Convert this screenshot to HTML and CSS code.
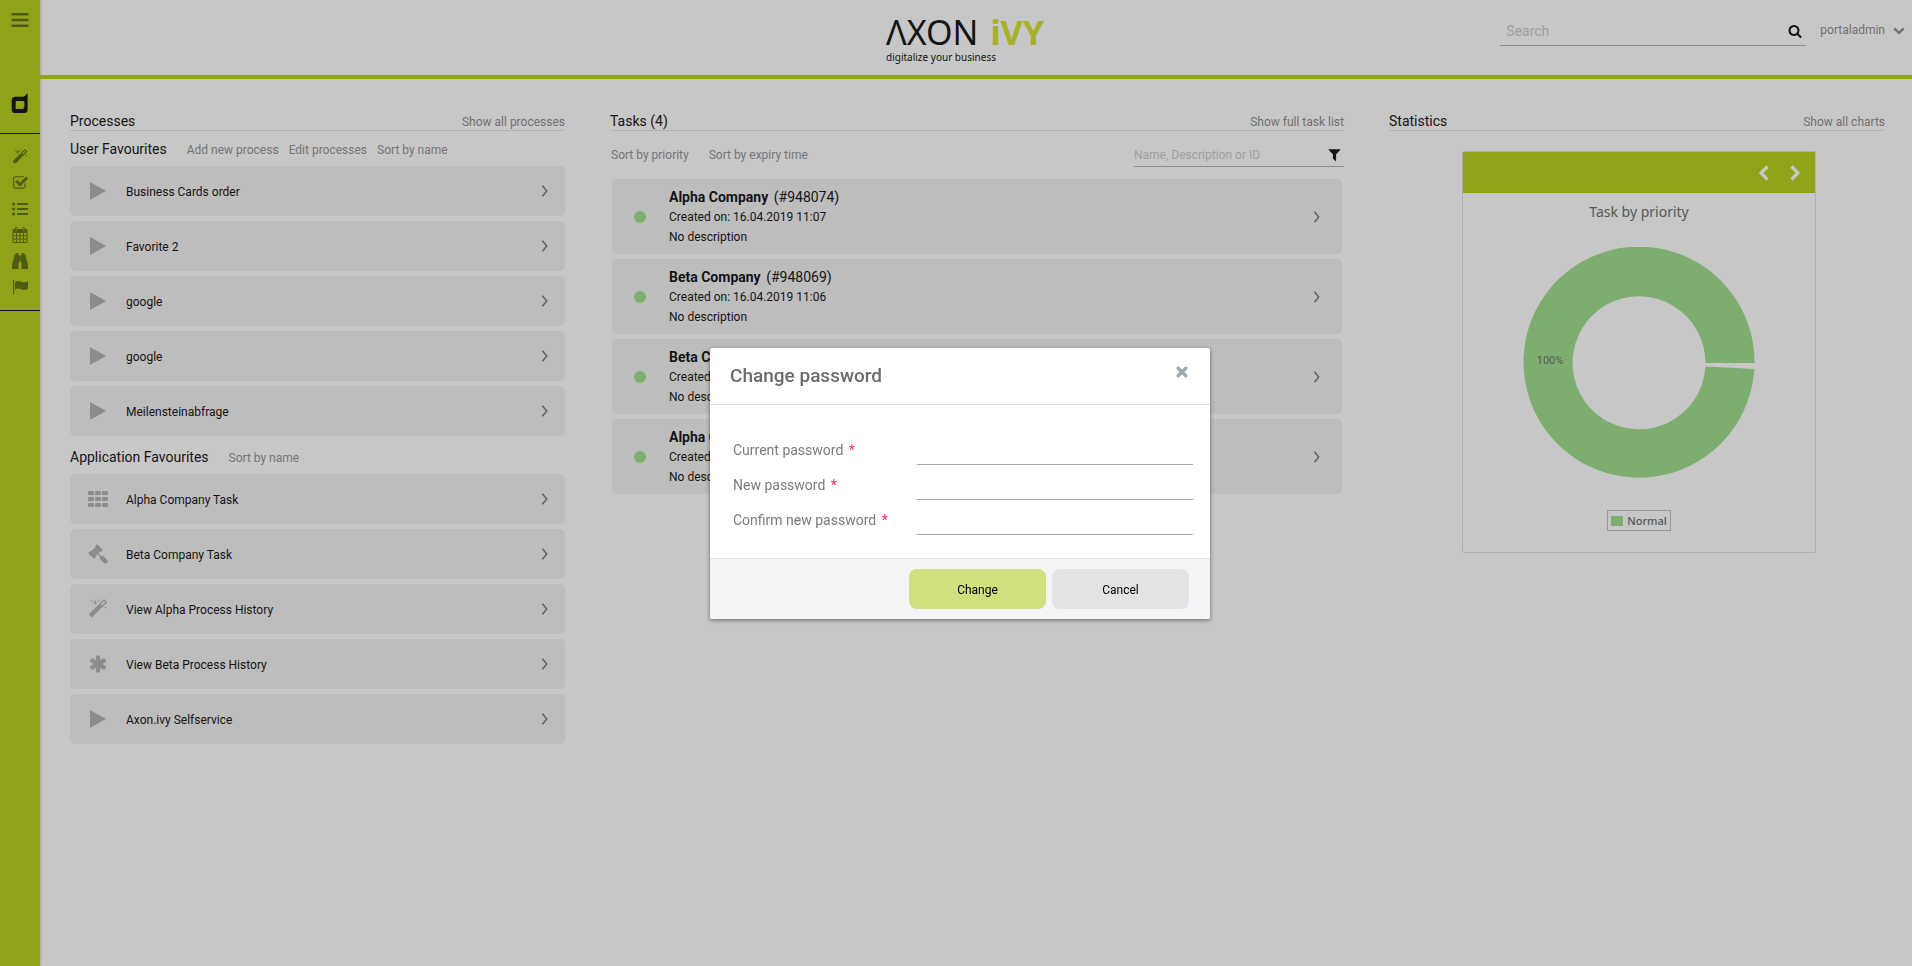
FILE: index.html
```html
<!DOCTYPE html>
<html lang="en">
<head>
<meta charset="utf-8">
<title>Axon.ivy Portal</title>
<link rel="stylesheet" href="styles.css">
</head>
<body>
<svg class="sprite" aria-hidden="true">
  <symbol id="play" viewBox="0 0 20 20"><path d="M2 1L18 10L2 19Z"/></symbol>
  <symbol id="chevron" viewBox="0 0 8 14"><path d="M1 1L6 7L1 13" fill="none" stroke="currentColor" stroke-width="1.8"/></symbol>
  <symbol id="magic" viewBox="0 0 1792 1792"><path d="M1254 581l293-293-107-107-293 293zm447-293q0 27-18 45l-1286 1286q-18 18-45 18t-45-18l-198-198q-18-18-18-45t18-45l1286-1286q18-18 45-18t45 18l198 198q18 18 18 45zm-1351-190l98 30-98 30-30 98-30-98-98-30 98-30 30-98zm350 162l196 60-196 60-60 196-60-196-196-60 196-60 60-196zm930 478l98 30-98 30-30 98-30-98-98-30 98-30 30-98zm-640-640l98 30-98 30-30 98-30-98-98-30 98-30 30-98z"/></symbol>
  <symbol id="th" viewBox="0 0 20 20"><path d="M1 2h4q1 0 1 1v2q0 1-1 1H1q-1 0-1-1V3q0-1 1-1zm7 0h4q1 0 1 1v2q0 1-1 1H8q-1 0-1-1V3q0-1 1-1zm7 0h4q1 0 1 1v2q0 1-1 1h-4q-1 0-1-1V3q0-1 1-1zM1 8h4q1 0 1 1v2q0 1-1 1H1q-1 0-1-1V9q0-1 1-1zm7 0h4q1 0 1 1v2q0 1-1 1H8q-1 0-1-1V9q0-1 1-1zm7 0h4q1 0 1 1v2q0 1-1 1h-4q-1 0-1-1V9q0-1 1-1zM1 14h4q1 0 1 1v2q0 1-1 1H1q-1 0-1-1v-2q0-1 1-1zm7 0h4q1 0 1 1v2q0 1-1 1H8q-1 0-1-1v-2q0-1 1-1zm7 0h4q1 0 1 1v2q0 1-1 1h-4q-1 0-1-1v-2q0-1 1-1z"/></symbol>
  <symbol id="gavel" viewBox="0 0 1792 1792"><path d="M1771 1536q0 53-37 90l-107 108q-39 37-91 37-53 0-90-37l-363-364q-38-36-38-90 0-53 43-96l-256-256-126 126q-14 14-34 14t-34-14q2 2 12.500 12t12.500 13 10 11.500 10 13.500 6 13.500 5.500 16.500 1.500 18q0 38-28 68-3 3-16.500 18t-19 20.500-18.500 16.500-22 15.500-22 9-26 4.500q-40 0-68-28l-408-408q-28-28-28-68 0-13 4.500-26t9-22 15.500-22 16.500-18.500 20.500-19 18-16.500q30-28 68-28 10 0 18 1.500t16.500 5.500 13.500 6 13.500 10 11.500 10 13 12.500 12 12.500q-14-14-14-34t14-34l348-348q14-14 34-14t34 14q-2-2-12.500-12t-12.500-13-10-11.500-10-13.500-6-13.500-5.500-16.500-1.500-18q0-38 28-68 3-3 16.500-18t19-20.500 18.500-16.500 22-15.500 22-9 26-4.500q40 0 68 28l408 408q28 28 28 68 0 13-4.500 26t-9 22-15.500 22-16.500 18.500-20.500 19-18 16.500q-30 28-68 28-10 0-18-1.500t-16.500-5.500-13.500-6-13.500-10-11.500-10-13-12.500-12-12.500q14 14 14 34t-14 34l-126 126 256 256q43-43 96-43 52 0 91 37l363 363q37 39 37 91z"/></symbol>
  <symbol id="asterisk" viewBox="0 0 1792 1792"><path d="M1546 1050q46 26 59.5 77.5t-12.5 97.5l-64 110q-26 46-77.5 59.5t-97.500-12.500l-266-153v307q0 52-38 90t-90 38h-128q-52 0-90-38t-38-90v-307l-266 153q-46 26-97.500 12.500t-77.500-59.500l-64-110q-26-46-12.500-97.500t59.500-77.500l266-154-266-154q-46-26-59.500-77.500t12.500-97.500l64-110q26-46 77.500-59.500t97.500 12.500l266 153v-307q0-52 38-90t90-38h128q52 0 90 38t38 90v307l266-153q46-26 97.500-12.500t77.500 59.500l64 110q26 46 12.500 97.500t-59.500 77.500l-266 154z"/></symbol>
  <symbol id="search" viewBox="0 0 1792 1792"><path d="M1216 832q0-185-131.5-316.5t-316.5-131.5-316.5 131.500-131.500 316.500 131.500 316.500 316.500 131.500 316.500-131.500 131.500-316.500zm512 832q0 52-38 90t-90 38q-54 0-90-38l-343-342q-179 124-399 124-143 0-273.500-55.500t-225-150-150-225-55.500-273.500 55.500-273.500 150-225 225-150 273.500-55.500 273.500 55.500 225 150 150 225 55.500 273.500q0 220-124 399l343 343q37 37 37 90z"/></symbol>
  <symbol id="filter" viewBox="0 0 1792 1792"><path d="M1595 295q17 41-14 70l-493 493v742q0 42-39 59-13 5-25 5-27 0-45-19l-256-256q-19-19-19-45v-486l-493-493q-31-29-14-70 17-39 59-39h1280q42 0 59 39z"/></symbol>
  <symbol id="down" viewBox="0 0 1792 1792"><path d="M1683 808l-742 741q-19 19-45 19t-45-19l-742-741q-19-19-19-45.500t19-45.500l166-165q19-19 45-19t45 19l531 531 531-531q19-19 45-19t45 19l166 165q19 19 19 45.500t-19 45.500z"/></symbol>
  <symbol id="check" viewBox="0 0 1792 1792"><path d="M1472 930v318q0 119-84.5 203.500t-203.500 84.500h-832q-119 0-203.500-84.500t-84.500-203.500v-832q0-119 84.500-203.500t203.500-84.500h832q63 0 117 25 15 7 18 23 3 17-9 29l-49 49q-10 10-23 10-3 0-9-2-23-6-45-6h-832q-66 0-113 47t-47 113v832q0 66 47 113t113 47h832q66 0 113-47t47-113v-254q0-13 9-22l64-64q10-10 23-10 6 0 12 3 20 8 20 29zm231-489l-814 814q-24 24-57 24t-57-24l-430-430q-24-24-24-57t24-57l110-110q24-24 57-24t57 24l263 263 647-647q24-24 57-24t57 24l110 110q24 24 24 57t-24 57z"/></symbol>
</svg>

<div class="app">
  <nav class="sidebar" aria-label="Main menu">
    <button class="side-button menu" aria-label="Toggle menu"><svg width="18" height="16" viewBox="0 0 18 16"><path d="M.5 1h17v2.600H.500zM.500 6.700h17v2.600H.500zM.500 12.400h17V15H.500z"/></svg></button>
    <a class="side-logo" href="#" aria-label="Dashboard"><svg width="18" height="20" viewBox="0 0 18 20"><path fill-rule="evenodd" d="M16.600 0V16.500Q16.600 20 13 20H4.300Q.700 20 .700 16.400V7.500Q.700 3.700 4.500 3.700H12Q14.500 3.200 16.600 0ZM4.700 7.900V15.900H12.600V14.700L13.400 14V8.800L12.600 7.900Z"/></svg></a>
    <div class="side-list">
      <a href="#" aria-label="Processes"><svg width="16" height="16"><use href="#magic"/></svg></a>
      <a href="#" aria-label="Tasks"><svg width="17" height="16"><use href="#check"/></svg></a>
      <a href="#" aria-label="Cases"><svg width="16" height="16" viewBox="0 0 16 16"><circle cx="1.600" cy="3" r="1.600"/><circle cx="1.600" cy="8" r="1.600"/><circle cx="1.600" cy="13" r="1.600"/><path d="M5 2h11v2H5zM5 7h11v2H5zM5 12h11v2H5z"/></svg></a>
      <a href="#" aria-label="Calendar"><svg width="16" height="16" viewBox="0 0 16 16"><path fill-rule="evenodd" d="M1.500 2H3V1Q3 0 4.200 0T5.400 1V2H10.600V1Q10.600 0 11.800 0T13 1V2H14.500Q15.500 2 15.500 3V15Q15.500 16 14.500 16H1.500Q.500 16 .500 15V3Q.500 2 1.500 2ZM1.500 6V8.300H4V6ZM5 6V8.300H7.500V6ZM8.500 6V8.300H11V6ZM12 6V8.300H14.500V6ZM1.500 9.200V11.600H4V9.200ZM5 9.200V11.600H7.500V9.200ZM8.500 9.200V11.600H11V9.200ZM12 9.200V11.600H14.500V9.200ZM1.500 12.600V15H4V12.600ZM5 12.600V15H7.500V12.600ZM8.500 12.600V15H11V12.600ZM12 12.600V15H14.500V12.600ZM3.900 1V4H4.600V1ZM11.500 1V4H12.200V1Z"/></svg></a>
      <a href="#" aria-label="Search"><svg width="16" height="16" viewBox="0 0 16 16"><path d="M3.500 0H6.500V2H7.300V10H6.500V16H0V12L2.300 3.500V2H3.500ZM12.500 0H9.500V2H8.700V10H9.500V16H16V12L13.700 3.500V2H12.500ZM7 3H9V8H7Z"/></svg></a>
      <a href="#" aria-label="Flags"><svg width="16" height="16" viewBox="0 0 16 16"><path d="M.5 1.500A1.200 1.200 0 0 1 2.600 2.500L2.100 3V15H1V3ZM3 3.500Q6 1.200 9 2.700T16 2V9.700Q12.500 12 9 10.300T3 11Z"/></svg></a>
    </div>
  </nav>

  <div class="main">
    <header class="topbar">
      <div class="brand">
        <div class="brand-name"><span>ΛXON</span><b>iVY</b></div>
        <div class="brand-tag">digitalize your business</div>
      </div>
      <div class="top-tools">
        <div class="search-box">
          <input type="text" placeholder="Search" aria-label="Search">
          <button aria-label="Run search"><svg width="14" height="14"><use href="#search"/></svg></button>
        </div>
        <button class="user">portaladmin <svg width="12" height="12"><use href="#down"/></svg></button>
      </div>
    </header>

    <main class="columns">
      <section class="processes">
        <div class="col-head"><h2>Processes</h2><a href="#">Show all processes</a></div>
        <div class="sub-head"><h3>User Favourites</h3><a href="#">Add new process</a><a href="#">Edit processes</a><a href="#">Sort by name</a></div>
        <div class="cards">
          <a class="card" href="#"><svg class="icon"><use href="#play"/></svg><span>Business Cards order</span><svg class="go"><use href="#chevron"/></svg></a>
          <a class="card" href="#"><svg class="icon"><use href="#play"/></svg><span>Favorite 2</span><svg class="go"><use href="#chevron"/></svg></a>
          <a class="card" href="#"><svg class="icon"><use href="#play"/></svg><span>google</span><svg class="go"><use href="#chevron"/></svg></a>
          <a class="card" href="#"><svg class="icon"><use href="#play"/></svg><span>google</span><svg class="go"><use href="#chevron"/></svg></a>
          <a class="card" href="#"><svg class="icon"><use href="#play"/></svg><span>Meilensteinabfrage</span><svg class="go"><use href="#chevron"/></svg></a>
        </div>
        <div class="sub-head second"><h3>Application Favourites</h3><a href="#">Sort by name</a></div>
        <div class="cards">
          <a class="card" href="#"><svg class="icon"><use href="#th"/></svg><span>Alpha Company Task</span><svg class="go"><use href="#chevron"/></svg></a>
          <a class="card" href="#"><svg class="icon"><use href="#gavel"/></svg><span>Beta Company Task</span><svg class="go"><use href="#chevron"/></svg></a>
          <a class="card" href="#"><svg class="icon"><use href="#magic"/></svg><span>View Alpha Process History</span><svg class="go"><use href="#chevron"/></svg></a>
          <a class="card" href="#"><svg class="icon"><use href="#asterisk"/></svg><span>View Beta Process History</span><svg class="go"><use href="#chevron"/></svg></a>
          <a class="card" href="#"><svg class="icon"><use href="#play"/></svg><span>Axon.ivy Selfservice</span><svg class="go"><use href="#chevron"/></svg></a>
        </div>
      </section>

      <section class="tasks">
        <div class="col-head"><h2>Tasks (4)</h2><a href="#">Show full task list</a></div>
        <div class="task-tools">
          <a href="#">Sort by priority</a><a href="#">Sort by expiry time</a>
          <div class="filter-box">
            <input type="text" placeholder="Name, Description or ID" aria-label="Filter tasks">
            <button aria-label="Filter"><svg width="15" height="15"><use href="#filter"/></svg></button>
          </div>
        </div>
        <div class="cards task-cards">
          <a class="task" href="#"><i class="dot"></i><div class="task-text"><h4><b>Alpha Company</b> (#948074)</h4><p>Created on: 16.04.2019 11:07</p><p>No description</p></div><svg class="go"><use href="#chevron"/></svg></a>
          <a class="task" href="#"><i class="dot"></i><div class="task-text"><h4><b>Beta Company</b> (#948069)</h4><p>Created on: 16.04.2019 11:06</p><p>No description</p></div><svg class="go"><use href="#chevron"/></svg></a>
          <a class="task" href="#"><i class="dot"></i><div class="task-text"><h4><b>Beta Company</b></h4><p>Created on:</p><p>No description</p></div><svg class="go"><use href="#chevron"/></svg></a>
          <a class="task" href="#"><i class="dot"></i><div class="task-text"><h4><b>Alpha Company</b></h4><p>Created on:</p><p>No description</p></div><svg class="go"><use href="#chevron"/></svg></a>
        </div>
      </section>

      <section class="stats">
        <div class="col-head"><h2>Statistics</h2><a href="#">Show all charts</a></div>
        <div class="chart-area">
          <div class="chart-card">
            <div class="chart-bar">
              <button aria-label="Previous chart"><svg width="12" height="18" viewBox="0 0 12 18"><path d="M9.500 2.500L3 9L9.500 15.500" fill="none" stroke="currentColor" stroke-width="3.200"/></svg></button>
              <button aria-label="Next chart"><svg width="12" height="18" viewBox="0 0 12 18"><path d="M2.500 2.500L9 9L2.500 15.500" fill="none" stroke="currentColor" stroke-width="3.200"/></svg></button>
            </div>
            <div class="chart-title">Task by priority</div>
            <svg class="donut" width="232" height="232" viewBox="-116 -116 232 232" role="img" aria-label="Normal 100%">
              <path d="M115.500 0A115.500 115.500 0 1 0 115.300 6L66.400 3.500A66.500 66.500 0 1 1 66.500 0Z"/>
              <text x="-89" y="1" text-anchor="middle">100%</text>
            </svg>
            <div class="legend"><i></i>Normal</div>
          </div>
        </div>
      </section>
    </main>
  </div>
</div>

<div class="overlay">
  <form class="dialog" role="dialog" aria-labelledby="dialog-title">
    <div class="dialog-head">
      <h1 id="dialog-title">Change password</h1>
      <button type="button" class="close" aria-label="Close"><svg width="12" height="12" viewBox="0 0 12 12"><path d="M2.200 2.200L9.800 9.800M9.800 2.200L2.200 9.800" fill="none" stroke="currentColor" stroke-width="3.400" stroke-linecap="round"/></svg></button>
    </div>
    <div class="dialog-body">
      <label for="current">Current password <em>*</em></label><input id="current" type="password">
      <label for="new">New password <em>*</em></label><input id="new" type="password">
      <label for="confirm">Confirm new password <em>*</em></label><input id="confirm" type="password">
    </div>
    <div class="dialog-foot">
      <button type="button" class="primary">Change</button>
      <button type="button">Cancel</button>
    </div>
  </form>
</div>
</body>
</html>
```

FILE: styles.css
```css
* { box-sizing: border-box; }
body {
  margin: 0;
  background: #c7c7c7;
  color: #141414;
  font: 12px/16px Roboto, "Liberation Sans", sans-serif;
}
h1, h2, h3, h4, p { margin: 0; font-weight: 400; }
a { color: inherit; text-decoration: none; }
button { border: 0; padding: 0; background: none; color: inherit; font: inherit; }
input { border: 0; padding: 0; background: none; font: inherit; outline: none; min-width: 0; }
input::placeholder { color: #a0a0a0; opacity: 1; }
svg { display: block; fill: currentColor; flex: none; }
.sprite { position: absolute; width: 0; height: 0; }

.app { display: flex; min-height: 100vh; }
.sidebar {
  width: 40px;
  flex: none;
  background: #8fa218;
  color: #4f5d13;
  box-shadow: 1px 0 2px #a8a8ac;
}
.side-button { display: flex; justify-content: center; width: 100%; padding-top: 12px; }
.side-logo { display: flex; justify-content: center; margin-top: 65px; color: #141414; }
.side-list {
  display: flex;
  flex-direction: column;
  margin-top: 20px;
  padding: 10px 0;
  border: solid #141414;
  border-width: 1px 0;
}
.side-list a { display: flex; align-items: center; justify-content: center; height: 26px; }

.main { flex: 1; min-width: 0; }
.topbar {
  display: grid;
  grid-template-columns: 1fr auto 1fr;
  height: 79px;
  border-bottom: 4px solid #8fa218;
}
.brand { grid-column: 2; padding-top: 16px; margin-right: 22px; }
.brand-name { display: flex; gap: 12px; font: 34px/32px "Noto Sans", sans-serif; }
.brand-name b { color: #a5b228; }
.brand-tag { font: 10px/12px "Noto Sans", sans-serif; margin-top: 3px; }
.top-tools { display: flex; justify-content: flex-end; align-items: flex-start; gap: 14px; padding-right: 7px; }
.search-box {
  display: flex;
  align-items: center;
  width: 306px;
  height: 46px;
  padding: 16px 4px 0 6px;
  border-bottom: 1px solid #8e8e8e;
}
.search-box input { flex: 1; font-size: 14px; }
.user { display: flex; align-items: center; gap: 8px; padding-top: 22px; color: #707070; }

.columns {
  display: grid;
  grid-template-columns: 495fr 45fr 734fr 45fr 496fr;
  padding: 32px 27px 0 30px;
}
.processes { grid-column: 1; }
.tasks { grid-column: 3; }
.stats { grid-column: 5; }
.col-head {
  display: flex;
  justify-content: space-between;
  align-items: baseline;
  height: 20px;
  border-bottom: 1px solid #b3b3b3;
  color: #707070;
}
h2, h3 { font-size: 14px; line-height: 20px; color: #141414; }
.sub-head { display: flex; align-items: baseline; gap: 10px; padding: 8px 0 7px; color: #747474; }
.sub-head h3 { margin-right: 10px; }
.second { padding-top: 11px; }
.cards { display: flex; flex-direction: column; gap: 5px; }
.card {
  display: flex;
  align-items: center;
  gap: 18px;
  height: 50px;
  padding: 0 16px 0 18px;
  border-radius: 5px;
  background: #bdbdbd;
}
.card span { flex: 1; padding-top: 2px; }
.icon { width: 20px; height: 20px; color: #8c8c8c; }
.go { width: 8px; height: 12px; color: #636363; }

.task-tools { display: flex; align-items: center; gap: 20px; height: 36px; padding: 12px 0 0 1px; color: #747474; }
.filter-box {
  display: flex;
  align-items: center;
  width: 210px;
  height: 24px;
  margin-left: auto;
  border-bottom: 1px solid #8e8e8e;
  padding-right: 2px;
  color: #141414;
}
.filter-box input { flex: 1; }
.task-cards { padding: 12px 2px 0; }
.task {
  display: flex;
  align-items: center;
  height: 75px;
  padding: 0 21px 0 22px;
  border-radius: 5px;
  background: #bdbdbd;
}
.dot { width: 12px; height: 12px; border-radius: 50%; background: #7ead70; }
.task-text { flex: 1; margin-left: 23px; }
.task h4 { font-size: 14px; line-height: 20px; }
.task b { margin-right: 2px; }
.task p { line-height: 20px; }

.chart-area { padding: 20px 0 0 4px; }
.chart-card {
  display: flex;
  flex-direction: column;
  align-items: center;
  width: 354px;
  margin: 0 auto;
  padding-bottom: 21px;
  border: 1px solid #b0b0b0;
  border-radius: 2px;
  color: #575757;
}
.chart-bar {
  display: flex;
  justify-content: flex-end;
  align-items: center;
  gap: 19px;
  align-self: stretch;
  height: 41px;
  padding-right: 14px;
  background: #8fa218;
  color: #c7c7c7;
}
.chart-title { font: 14px/18px "Noto Sans", sans-serif; margin-top: 10px; }
.donut { margin-top: 26px; color: #7ead70; }
.donut text { fill: #575757; font-size: 11px; }
.legend {
  display: flex;
  align-items: center;
  gap: 4px;
  margin-top: 31px;
  padding: 0 3px;
  border: 1px solid #999;
  font: 500 11px/19px "Noto Sans", sans-serif;
}
.legend i { width: 12px; height: 10px; background: #7ead70; }

.overlay {
  position: fixed;
  inset: 0;
  display: flex;
  align-items: center;
  justify-content: center;
  padding-left: 8px;
}
.dialog {
  width: 500px;
  border-radius: 2px;
  background: #fff;
  box-shadow: 0 1px 4px rgba(0, 0, 0, .5);
  overflow: hidden;
}
.dialog-head {
  display: flex;
  justify-content: space-between;
  height: 57px;
  padding: 16px 22px 0 20px;
  border-bottom: 1px solid #dcdcdc;
}
h1 { font-size: 19px; font-weight: 500; line-height: 24px; color: #6a6a6a; }
.close { align-self: flex-start; margin-top: 2px; color: #9aabb3; }
.dialog-body {
  display: grid;
  grid-template-columns: 184px 1fr;
  padding: 25px 17px 23px 23px;
  color: #7b7b7b;
  font-size: 14px;
}
.dialog-body label { height: 35px; line-height: 41px; }
.dialog-body em { margin-left: 2px; color: #f0325f; font-style: normal; }
.dialog-body input { border-bottom: 1px solid #a6a6a6; }
.dialog-foot {
  display: flex;
  justify-content: flex-end;
  gap: 6px;
  padding: 10px 21px;
  border-top: 1px solid #e2e4e6;
  background: #f3f4f6;
}
.dialog-foot button {
  width: 137px;
  height: 40px;
  padding-top: 2px;
  border-radius: 8px;
  background: #e1e3e5;
  color: #000;
}
.dialog-foot .primary { background: #d1df7e; }
```
